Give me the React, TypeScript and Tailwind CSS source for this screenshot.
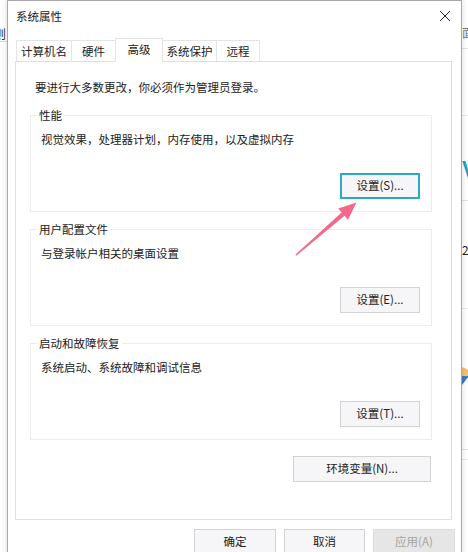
import React from 'react';

const font = "font-['Noto_Sans_CJK_SC','Noto_Sans',sans-serif]";

type TabItem = { label: string; width: string; active?: boolean };

const tabs: TabItem[] = [
  { label: '计算机名', width: 'w-[56px]' },
  { label: '硬件', width: 'w-[45px]' },
  { label: '高级', width: 'w-[48px]', active: true },
  { label: '系统保护', width: 'w-[55px]' },
  { label: '远程', width: 'w-[44px]' },
];

const groups = [
  { title: '性能', text: '视觉效果，处理器计划，内存使用，以及虚拟内存', button: '设置(S)...', focused: true },
  { title: '用户配置文件', text: '与登录帐户相关的桌面设置', button: '设置(E)...' },
  { title: '启动和故障恢复', text: '系统启动、系统故障和调试信息', button: '设置(T)...' },
];

const CloseIcon = () => (
  <svg width="12" height="12" viewBox="0 0 12 12" fill="none" stroke="#222" strokeWidth="1">
    <path d="M1 1 L11 11 M11 1 L1 11" />
  </svg>
);

const Button: React.FC<{ label: string; className?: string; focused?: boolean; disabled?: boolean }> = ({
  label,
  className = '',
  focused,
  disabled,
}) => (
  <button
    className={
      'h-[26px] flex items-center justify-center text-[11.5px] leading-none ' +
      (disabled
        ? 'bg-[#e6e6e6] border border-[#dcdcdc] text-[#a4a4a4] '
        : focused
          ? 'bg-[#f6f6f8] border-2 border-[#2aa9c4] text-[#222] '
          : 'bg-[#f6f6f8] border border-[#d2d2d2] text-[#222] ') +
      className
    }
  >
    {label}
  </button>
);

const GroupBox: React.FC<{ title: string; text: string; button: string; focused?: boolean; first?: boolean }> = ({
  title,
  text,
  button,
  focused,
  first,
}) => (
  <fieldset
    className={
      'border border-[#ececec] pl-[6px] pr-[11px] pt-[8px] pb-[12px] ' + (first ? 'mt-[12px]' : 'mt-[9px]')
    }
  >
    <legend className="px-[2px] text-[11.5px] leading-[16px] text-[#222]">{title}</legend>
    <p className="pl-[4px] text-[11.5px] leading-[16px] text-[#222]">{text}</p>
    <div className="mt-[26px] flex justify-end">
      <Button label={button} focused={focused} className="w-[80px]" />
    </div>
  </fieldset>
);

// pink callout arrow pointing at the first settings button
const Arrow = () => (
  <svg className="pointer-events-none absolute left-0 top-0" width="468" height="552">
    <polygon
      points="295.5,254.4 341.6,212.4 338.2,208.6 356.5,202.5 348,219.7 344.6,215.8 296.5,255.6"
      fill="#f3698c"
    />
  </svg>
);

export default function App() {
  return (
    <div className={`relative flex h-[552px] w-[468px] justify-between overflow-hidden bg-white ${font}`}>
      {/* page behind, left edge */}
      <div className="flex w-[7px] flex-col overflow-hidden">
        <span className="-ml-[6px] mt-[27px] text-[12px] leading-[14px] text-[#333]">则</span>
        <div className="h-px w-full bg-[#dedede]" />
      </div>

      {/* page behind, right edge */}
      <div className="flex w-[6px] flex-col overflow-hidden">
        <span className="mt-[25px] text-[12px] leading-[16px] text-[#777]">面</span>
        <div className="mt-[7px] h-px w-full bg-[#e2e2e2]" />
        <div className="mt-[66px] h-px w-full bg-[#e8e8e8]" />
        <span className="mt-[34px] text-[48px] font-light leading-[50px] text-[#1ba3c9]">V</span>
        <div className="h-px w-full bg-[#e2e2e2]" />
        <span className="mt-[41px] text-[12px] leading-[16px] text-[#222]">2</span>
        <div className="mt-[50px] h-px w-full bg-[#e8e8e8]" />
        <svg className="mt-[55px] shrink-0" width="7" height="22" viewBox="0 0 7 22">
          <path d="M0 3 L7 6 L7 12 L0 12 Z" fill="#f2c46a" />
          <path d="M0 12 L7 12 L0 21 Z" fill="#3c7bc6" />
        </svg>
        <div className="mt-[63px] h-px w-full bg-[#e2e2e2]" />
        <div className="mt-[9px] h-px w-full bg-[#e8e8e8]" />
      </div>

      {/* 系统属性 dialog, floating over the page */}
      <div className="absolute left-[7px] top-0 h-[580px] w-[455px] border border-[#a8a8a8] bg-white shadow-[0_0_6px_rgba(0,0,0,0.15)]">
        <div className="flex h-[29px] items-center justify-between pl-[8px] pr-[10px]">
          <span className="text-[11.5px] leading-[16px] text-[#1a1a1a]">系统属性</span>
          <CloseIcon />
        </div>

        <div className="ml-[8px] mt-[8px] flex h-[24px] items-start">
          {tabs.map((t) => (
            <div
              key={t.label}
              className={
                'flex items-center justify-center border border-b-0 border-[#e4e4e4] bg-white text-[11.5px] leading-[16px] text-[#222] -ml-px first:ml-0 ' +
                t.width +
                (t.active ? ' relative z-10 h-[24px] pb-[4px]' : ' mt-[2px] h-[21px]')
              }
            >
              {t.label}
            </div>
          ))}
        </div>

        <div className="relative -mt-px ml-[7px] h-[459px] w-[437px] border border-[#dfdfdf] bg-white">
          <p className="pl-[19px] pt-[17px] text-[11.5px] leading-[16px] text-[#222]">
            要进行大多数更改，你必须作为管理员登录。
          </p>
          <div className="ml-[14px] w-[402px]">
            {groups.map((g, i) => (
              <GroupBox key={g.title} {...g} first={i === 0} />
            ))}
            <div className="mt-[16px] flex justify-end pr-[1px]">
              <Button label="环境变量(N)..." className="w-[138px]" />
            </div>
          </div>
        </div>

        <div className="mt-[9px] flex justify-end gap-[8px] pr-[6px]">
          <Button label="确定" className="w-[82px]" />
          <Button label="取消" className="w-[81px]" />
          <Button label="应用(A)" className="w-[82px]" disabled />
        </div>
      </div>

      <Arrow />
    </div>
  );
}
